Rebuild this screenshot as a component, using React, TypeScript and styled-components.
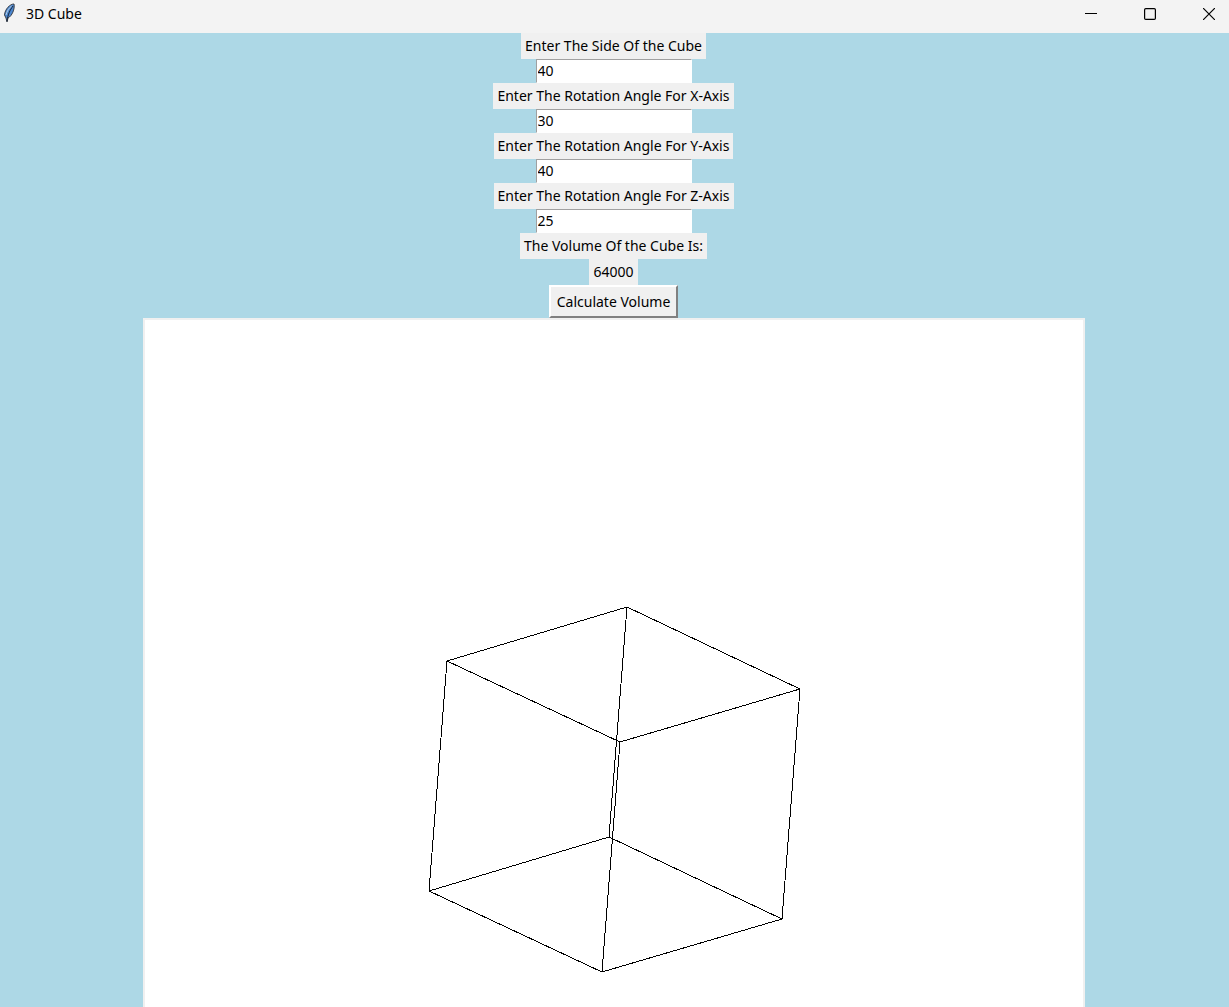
import React, { useState } from "react";
import styled, { createGlobalStyle } from "styled-components";

const GlobalStyle = createGlobalStyle`
  * { box-sizing: border-box; }
  html, body { margin: 0; overflow: hidden; }
  body {
    background: #add8e6;
    color: #000;
    font-family: "Noto Sans", "Open Sans", sans-serif;
    font-size: 14px;
  }
`;

const Window = styled.div`
  display: flex;
  flex-direction: column;
  height: 100vh;
  background: #add8e6;
`;

const TitleBar = styled.header`
  display: flex;
  flex: none;
  align-items: flex-start;
  justify-content: space-between;
  height: 33px;
  background: #f3f3f3;
`;

const Title = styled.h1`
  display: flex;
  align-items: center;
  gap: 8px;
  height: 26px;
  margin: 0;
  padding-left: 2px;
  font-size: 14px;
  font-weight: 400;
`;

const WindowButtons = styled.div`
  display: flex;
  gap: 19px;
`;

const WindowButton = styled.button`
  display: grid;
  place-items: center;
  width: 40px;
  height: 28px;
  padding: 0;
  border: 0;
  background: transparent;
`;

const Content = styled.main`
  display: flex;
  flex: 1;
  flex-direction: column;
  min-height: 0;
  padding-right: 2px;
`;

const Form = styled.form`
  display: flex;
  flex: none;
  flex-direction: column;
  align-items: center;
`;

const Caption = styled.label`
  height: 26px;
  padding: 0 4px;
  background: #f0f0f0;
  line-height: 26px;
  white-space: nowrap;
`;

const Result = styled(Caption).attrs({ as: "output" })``;

const Entry = styled.input`
  width: 156px;
  height: 24px;
  padding: 0 1px 2px;
  border: 1px solid #fff;
  border-top-color: #a0a0a0;
  border-left-color: #a0a0a0;
  border-radius: 0;
  background: #fff;
  color: #000;
  font: inherit;
  outline: none;
`;

const CalculateButton = styled.button`
  height: 33px;
  padding: 0 6px;
  border: 2px solid #fff;
  border-right-color: #808080;
  border-bottom-color: #808080;
  border-radius: 0;
  background: #f0f0f0;
  color: #000;
  font: inherit;
`;

const Canvas = styled.section`
  display: flex;
  flex: 1;
  justify-content: center;
  align-self: center;
  width: 100%;
  max-width: 942px;
  min-height: 0;
  border: 2px solid #f0f0f0;
  border-bottom: 0;
  background: #fff;
  overflow: hidden;
`;

const Drawing = styled.svg`
  flex: none;
  width: 938px;
  height: 938px;
`;

const fields = [
  { id: "side", label: "Enter The Side Of the Cube", value: "40" },
  { id: "x", label: "Enter The Rotation Angle For X-Axis", value: "30" },
  { id: "y", label: "Enter The Rotation Angle For Y-Axis", value: "40" },
  { id: "z", label: "Enter The Rotation Angle For Z-Axis", value: "25" },
];

const topFace = [[482, 287], [655, 369], [475, 422], [302, 341]];
const bottomFace = [[464, 517], [637, 599], [457, 652], [284, 571]];

const Feather = () => (
  <svg width="16" height="20" viewBox="0 0 16 20" aria-hidden="true">
    <path d="M12 1C8 1 3 6 2.5 12L4 15L5 19L6 15C10 13 13 6 12 1Z" fill="#4a86cf" stroke="#3a3f48" />
    <path d="M11 3C8 7 6 11 5 18" fill="none" stroke="#172437" />
    <path d="M9.500 3C7 5 5 8 4 12" fill="none" stroke="#b8cee3" />
  </svg>
);

const Cube = () => (
  <Drawing viewBox="0 0 938 938" role="img" aria-label="Wireframe cube">
    <g fill="none" stroke="#000" shapeRendering="crispEdges">
      <polygon points={topFace.join(" ")} />
      <polygon points={bottomFace.join(" ")} />
      {topFace.map(([x, y], i) => (
        <line key={i} x1={x} y1={y} x2={bottomFace[i][0]} y2={bottomFace[i][1]} />
      ))}
    </g>
  </Drawing>
);

export default function App() {
  const [values, setValues] = useState(fields.map((f) => f.value));
  const [volume, setVolume] = useState(64000);

  const calculate = (e: React.FormEvent) => {
    e.preventDefault();
    setVolume(Number(values[0]) ** 3);
  };

  return (
    <Window>
      <GlobalStyle />
      <TitleBar>
        <Title><Feather />3D Cube</Title>
        <WindowButtons>
          <WindowButton aria-label="Minimize">
            <svg width="12" height="12" viewBox="0 0 12 12"><path d="M0 5.5H12" stroke="#000" /></svg>
          </WindowButton>
          <WindowButton aria-label="Maximize">
            <svg width="12" height="12" viewBox="0 0 12 12"><rect x=".6" y=".6" width="10.8" height="10.8" rx="1.2" fill="none" stroke="#000" strokeWidth="1.2" /></svg>
          </WindowButton>
          <WindowButton aria-label="Close">
            <svg width="12" height="12" viewBox="0 0 12 12"><path d="M0 0L12 12M12 0L0 12" stroke="#000" strokeWidth="1.2" /></svg>
          </WindowButton>
        </WindowButtons>
      </TitleBar>
      <Content>
        <Form onSubmit={calculate}>
          {fields.map((field, i) => (
            <React.Fragment key={field.id}>
              <Caption htmlFor={field.id}>{field.label}</Caption>
              <Entry
                id={field.id}
                value={values[i]}
                onChange={(e) => setValues(values.map((v, n) => (n === i ? e.target.value : v)))}
              />
            </React.Fragment>
          ))}
          <Caption as="span">The Volume Of the Cube Is:</Caption>
          <Result>{volume}</Result>
          <CalculateButton type="submit">Calculate Volume</CalculateButton>
        </Form>
        <Canvas><Cube /></Canvas>
      </Content>
    </Window>
  );
}
